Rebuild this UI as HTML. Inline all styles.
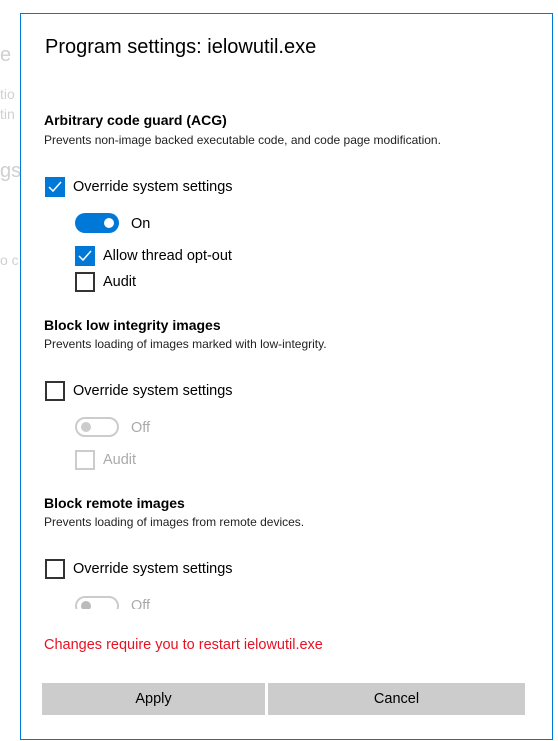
<!DOCTYPE html>
<html><head><style>
body{margin:0;width:558px;height:741px;background:#fff;position:relative;overflow:hidden;font-family:"Liberation Sans",sans-serif;color:#000}
.a{position:absolute;white-space:nowrap}
.bg{color:#d0d0d0;font-size:14px}
#d{position:absolute;left:20px;top:13px;width:531px;height:725px;border:1px solid #0078d7;background:#fff}
.cb{position:absolute;width:16px;height:16px;border:2px solid #333;box-sizing:content-box}
.cb.on{background:#0078d7;border-color:#0078d7}
.cb.dis{border-color:#ccc}
.t{font-size:14.5px}
.h{font-size:14px;font-weight:bold}
.s{font-size:12px;color:#222}
.tg{position:absolute;width:40px;height:16px;border-radius:10px}
.btn{position:absolute;top:683px;height:32px;background:#ccc;font-size:14.5px;text-align:center;line-height:33px}
</style></head><body>
<div class="a bg" style="left:0;top:44px;font-size:20px">e</div>
<div class="a bg" style="left:0;top:86px">tio</div>
<div class="a bg" style="left:0;top:106px">tin</div>
<div class="a bg" style="left:0;top:160px;font-size:20px">gs</div>
<div class="a bg" style="left:0;top:252px">o c</div>
<div id="d"></div>
<div class="a" style="left:45px;top:36px;font-size:20px">Program settings: ielowutil.exe</div>
<div class="a h" style="left:44px;top:112px">Arbitrary code guard (ACG)</div>
<div class="a s" style="left:44px;top:133px">Prevents non-image backed executable code, and code page modification.</div>
<div class="cb on" style="left:45px;top:177px"></div>
<svg class="a" style="left:47px;top:179px" width="16" height="16"><path d="M2 8 L6 12 L14 3" stroke="#fff" stroke-width="1.5" fill="none"/></svg>
<div class="a t" style="left:73px;top:179px">Override system settings</div>
<div class="tg" style="left:75px;top:213px;width:44px;height:20px;background:#0078d7"></div>
<div class="a" style="left:104px;top:218px;width:10px;height:10px;border-radius:5px;background:#fff"></div>
<div class="a t" style="left:131px;top:216px">On</div>
<div class="cb on" style="left:75px;top:246px"></div>
<svg class="a" style="left:77px;top:248px" width="16" height="16"><path d="M2 8 L6 12 L14 3" stroke="#fff" stroke-width="1.5" fill="none"/></svg>
<div class="a t" style="left:103px;top:248px">Allow thread opt-out</div>
<div class="cb" style="left:75px;top:272px"></div>
<div class="a t" style="left:103px;top:274px">Audit</div>
<div class="a h" style="left:44px;top:317px">Block low integrity images</div>
<div class="a s" style="left:44px;top:337px">Prevents loading of images marked with low-integrity.</div>
<div class="cb" style="left:45px;top:381px"></div>
<div class="a t" style="left:73px;top:383px">Override system settings</div>
<div class="tg" style="left:75px;top:417px;border:2px solid #ccc"></div>
<div class="a" style="left:81px;top:422px;width:10px;height:10px;border-radius:5px;background:#ccc"></div>
<div class="a t" style="left:131px;top:420px;color:#aaa">Off</div>
<div class="cb dis" style="left:75px;top:450px"></div>
<div class="a t" style="left:103px;top:452px;color:#aaa">Audit</div>
<div class="a h" style="left:44px;top:495px">Block remote images</div>
<div class="a s" style="left:44px;top:515px">Prevents loading of images from remote devices.</div>
<div class="cb" style="left:45px;top:559px"></div>
<div class="a t" style="left:73px;top:561px">Override system settings</div>
<div class="a" style="left:70px;top:592px;width:100px;height:17px;overflow:hidden">
 <div class="tg" style="left:5px;top:4px;border:2px solid #ccc"></div>
 <div class="a" style="left:11px;top:9px;width:10px;height:10px;border-radius:5px;background:#bbb"></div>
 <div class="a t" style="left:61px;top:6px;color:#aaa">Off</div>
</div>
<div class="a t" style="left:44px;top:637px;color:#e81123">Changes require you to restart ielowutil.exe</div>
<div class="btn" style="left:42px;width:223px">Apply</div>
<div class="btn" style="left:268px;width:257px">Cancel</div>
</body></html>
